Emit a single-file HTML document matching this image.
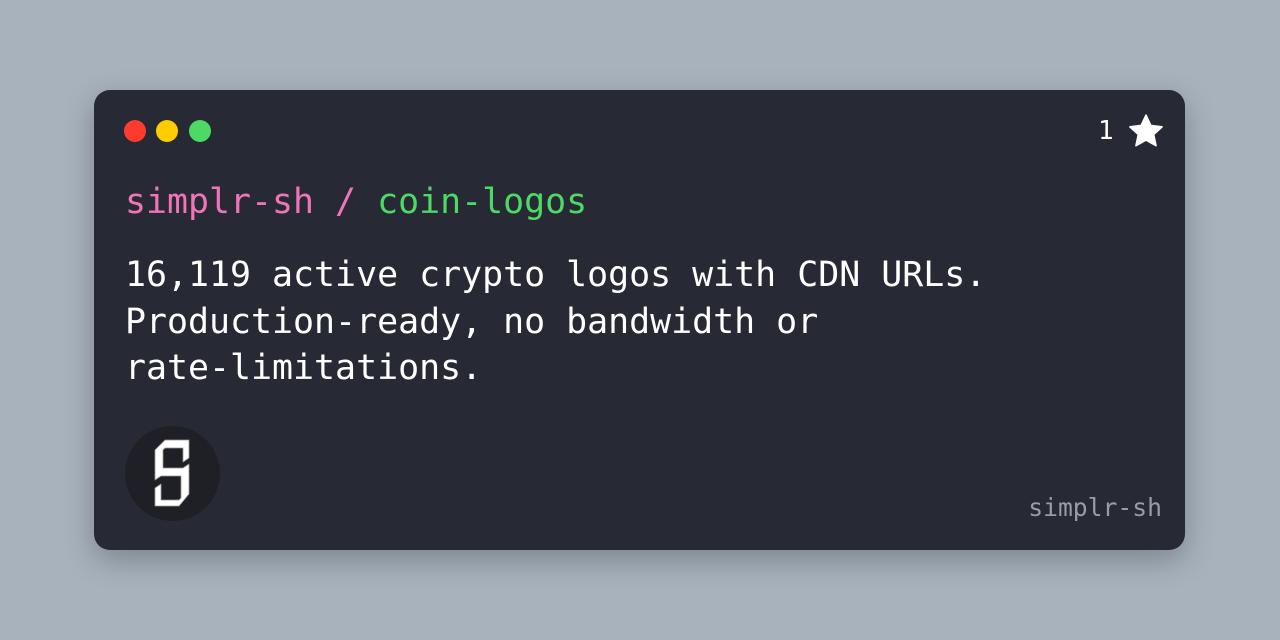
<!DOCTYPE html>
<html><head><meta charset="utf-8"><style>
body{margin:0;width:1280px;height:640px;background:#a7b2bd;position:relative;overflow:hidden;font-family:"DejaVu Sans Mono","Liberation Mono",monospace}
.card{position:absolute;left:94px;top:90px;width:1091px;height:460px;background:#272934;border-radius:16px;box-shadow:0 10px 30px rgba(0,0,0,.25)}
.dot{position:absolute;top:30px;width:22px;height:22px;border-radius:50%}
.t{position:absolute;left:31px;top:89px;font-size:34.9px;line-height:46px;white-space:pre}
.d{position:absolute;left:31px;top:162px;font-size:34.9px;line-height:46.5px;color:#fff;white-space:pre}
.star{position:absolute;left:1004px;top:21px;color:#fff;font-size:26px;display:flex;align-items:center;gap:12px}
.foot{position:absolute;right:23px;top:403px;font-size:24.7px;color:#9a9ca3}
.logo{position:absolute;left:31px;top:336px;width:95px;height:95px;border-radius:50%;background:#1f2026}
</style></head><body>
<div class="card">
<div class="dot" style="left:30px;background:#ff3b30"></div>
<div class="dot" style="left:62px;background:#ffcc00"></div>
<div class="dot" style="left:95px;background:#4cd964"></div>
<div class="star"><span>1</span><svg width="40" height="40" viewBox="0 0 24 24"><path d="M12 2.5l2.9 6.2 6.7.8-5 4.6 1.4 6.7L12 17.4l-6 3.4 1.4-6.7-5-4.6 6.7-.8z" fill="#fff" stroke="#fff" stroke-width="1" stroke-linejoin="round"/></svg></div>
<div class="t"><span style="color:#f075b8">simplr-sh / </span><span style="color:#4cd964">coin-logos</span></div>
<div class="d">16,119 active crypto logos with CDN URLs.
Production-ready, no bandwidth or
rate-limitations.</div>
<div class="logo"><svg width="95" height="95" viewBox="0 0 95 95"><path d="M30 24l10-10h24v18l-6 4V22H40l-2 2v18h20l6-4v30L54 80H30V62l6-4v16h18l2-2V50H36l-6 4z" fill="#fff" stroke="#999" stroke-width="0.8" stroke-linejoin="round"/></svg></div>
<div class="foot">simplr-sh</div>
</div>
</body></html>
